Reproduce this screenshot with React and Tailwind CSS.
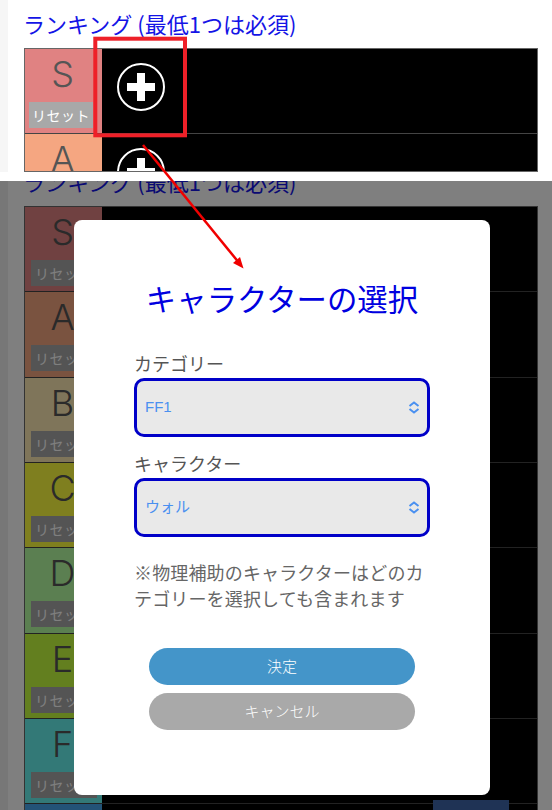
const FONT = "font-['Noto_Sans_CJK_JP','Noto_Sans',sans-serif]";

const TIERS = [
  { name: "S", bg: "bg-[#e08282]" },
  { name: "A", bg: "bg-[#f5a681]" },
  { name: "B", bg: "bg-[#ffebb4]" },
  { name: "C", bg: "bg-[#ffff3e]" },
  { name: "D", bg: "bg-[#b6ffa2]" },
  { name: "E", bg: "bg-[#c6ff3e]" },
  { name: "F", bg: "bg-[#66f2ee]" },
  { name: "G", bg: "bg-[#46a6ee]" },
];

function PlusIcon() {
  return (
    <svg width="50" height="50" viewBox="0 0 50 50" aria-hidden="true">
      <circle cx="25" cy="25" r="23" fill="none" stroke="#fff" strokeWidth="2" />
      <path d="M21 11h8v10h10v8H29v10h-8V29H11v-8h10z" fill="#fff" />
    </svg>
  );
}

function TierRow({ tier, resetClass }) {
  return (
    <div className="flex h-[85.33px] shrink-0 border-b border-[#444]">
      <div className={`${tier.bg} flex w-[77px] shrink-0 flex-col`}>
        <span className="mt-[3px] pr-[2px] text-center text-[36px] leading-[44px] font-light text-[#555] font-['Inter',sans-serif]">
          {tier.name}
        </span>
        <button className={`${resetClass} mt-[6px] h-[26px] bg-[#a8a8a8] text-[14px] leading-[26px] tracking-[0.5px] text-white`}>
          リセット
        </button>
      </div>
      <div className="flex flex-1 items-center bg-black pb-[8px] pl-[14px]">
        <PlusIcon />
      </div>
    </div>
  );
}

function Ranking({ heightClass, dense }) {
  return (
    <div className={dense ? "-mt-[13px]" : "mt-[10px]"}>
      <h2 className="h-[30px] pl-[15px] text-[22px] leading-[26px] font-normal text-[#1414e6]">
        ランキング (最低1つは必須)
      </h2>
      <div className={`${heightClass} mt-[8px] ml-[16px] w-[514px] overflow-hidden border border-[#666]`}>
        {TIERS.map((t) => (
          <TierRow key={t.name} tier={t} resetClass={dense ? "ml-[6px] w-[66px]" : "ml-[4px] w-[64px]"} />
        ))}
      </div>
    </div>
  );
}

function Chevrons() {
  return (
    <svg width="12" height="13" viewBox="0 0 12 13" fill="none" stroke="#4a90f0" strokeWidth="2" aria-hidden="true">
      <path d="M1.5 5 6 1.5 10.5 5" />
      <path d="M1.5 8 6 11.5 10.5 8" />
    </svg>
  );
}

function Field({ label, value }) {
  return (
    <div>
      <label className="block h-[27px] text-[18px] leading-[25px] text-[#555]">{label}</label>
      <div className="flex h-[59px] items-center justify-between rounded-[10px] border-[3px] border-[#0000c8] bg-[#e9e9e9] pr-[7px] pl-[8px] font-['Liberation_Sans','Noto_Sans_CJK_JP',sans-serif] text-[15px] text-[#4a90f0]">
        <span>{value}</span>
        <Chevrons />
      </div>
    </div>
  );
}

function Modal() {
  return (
    <div className="absolute top-[39px] left-[74px] flex h-[575px] w-[416px] flex-col rounded-[8px] bg-white px-[60px]">
      <h1 className="mt-[56px] text-center text-[30.4px] leading-[44px] font-normal text-[#0000e0]">
        キャラクターの選択
      </h1>
      <div className="mt-[31px] flex flex-col gap-[14px]">
        <Field label="カテゴリー" value="FF1" />
        <Field label="キャラクター" value="ウォル" />
      </div>
      <p className="mt-[22px] text-[18px] leading-[26px] tracking-[0.15px] text-[#666]">
        ※物理補助のキャラクターはどのカテゴリーを選択しても含まれます
      </p>
      <div className="mt-[37px] flex flex-col gap-[8px] px-[15px]">
        <button className="h-[37px] rounded-full bg-[#4495c9] text-[15px] font-light text-white">決定</button>
        <button className="h-[37px] rounded-full bg-[#a9a9a9] text-[15px] font-light text-white">キャンセル</button>
      </div>
    </div>
  );
}

export default function App() {
  return (
    <div className={`relative flex h-[810px] w-[552px] flex-col overflow-hidden bg-white ${FONT}`}>
      <section className="flex h-[172px] shrink-0 overflow-hidden bg-white">
        <div className="w-[8px] shrink-0 bg-[#f6f6f6]" />
        <div className="flex-1">
          <Ranking heightClass="h-[124px]" />
        </div>
      </section>

      <section className="relative mt-[9px] flex flex-1 overflow-hidden bg-white">
        <div className="w-[8px] shrink-0 bg-[#eeeeee]" />
        <div className="flex-1">
          <Ranking heightClass="h-[640px]" dense />
        </div>
        <div className="absolute top-[619px] left-[433px] h-[12px] w-[76px] bg-[#3e66aa]" />
        <div className="absolute inset-0 bg-black/50" />
        <Modal />
      </section>

      <svg className="pointer-events-none absolute inset-0" width="552" height="810" viewBox="0 0 552 810" aria-hidden="true">
        <rect x="95.3" y="38.7" width="89.7" height="96.6" fill="none" stroke="#ee2028" strokeWidth="4" />
        <path d="M143 145 240 264" stroke="#f00000" strokeWidth="2.5" fill="none" />
        <path d="M243.5 268.5 233 263 240 257z" fill="#f00000" />
      </svg>
    </div>
  );
}
